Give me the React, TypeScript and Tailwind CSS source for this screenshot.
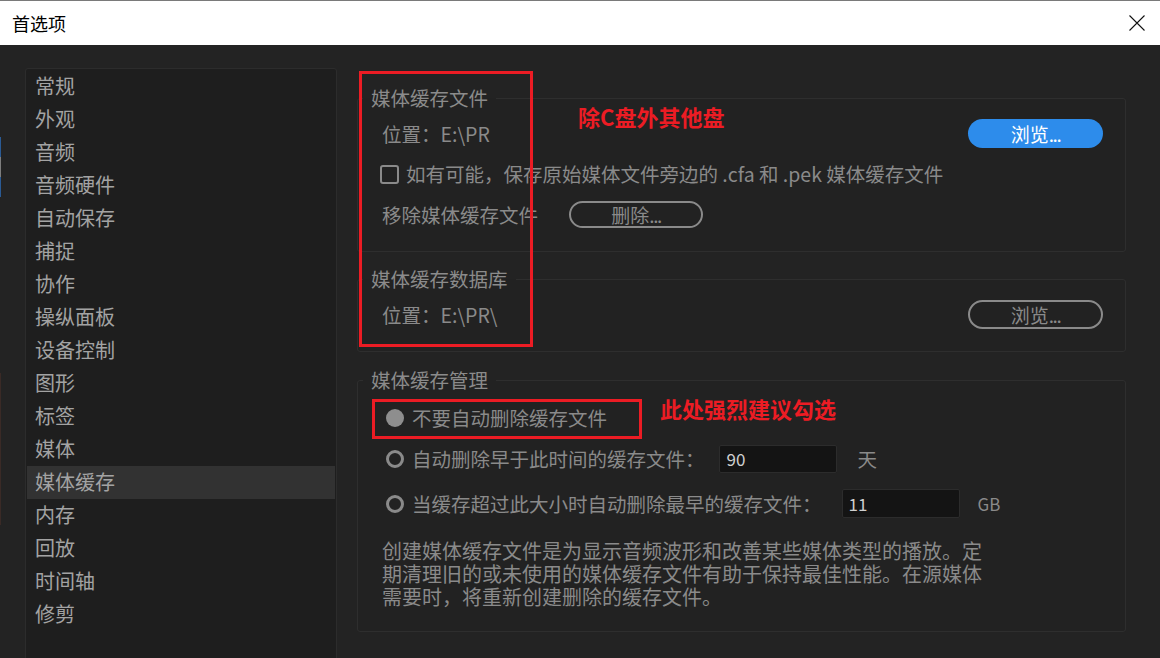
import React from 'react';

const NAV_ITEMS = [
    '常规', '外观', '音频', '音频硬件', '自动保存', '捕捉', '协作', '操纵面板', '设备控制',
    '图形', '标签', '媒体', '媒体缓存', '内存', '回放', '时间轴', '修剪',
];

const Radio: React.FC<{ checked?: boolean }> = ({ checked }) => (
    <span
        className={`ml-[4px] w-[18px] h-[18px] rounded-full shrink-0 ${checked ? 'bg-[#8e8e8e]' : 'border-[3px] border-[#8a8a8a]'}`}
    />
);

const Group: React.FC<{ title: string; children: React.ReactNode }> = ({ title, children }) => (
    <fieldset className="rounded-[3px] border border-[#2e2e2e] bg-[#222222]">
        <legend className="ml-[5px] px-[8px] text-[19.5px] leading-[24px] text-[#8b8b8b]">{title}</legend>
        {children}
    </fieldset>
);

// 按钮文字后的省略号贴着基线，点距较紧
const Dots = () => <span className="tracking-[-1.5px]">...</span>;

// 首选项 > 媒体缓存 设置页
export default function App() {
    return (
        <div className="w-[1160px] h-[658px] overflow-hidden bg-[#232323] font-['Noto_Sans_CJK_SC',sans-serif]">
            {/* 窗口标题栏 */}
            <div className="h-[45px] bg-white border-t border-[#7a7a7a] flex items-center justify-between pl-[12px] pr-[15px]">
                <span className="text-[18px] leading-none text-black">首选项</span>
                <svg width="16" height="16" viewBox="0 0 16 16" className="mt-[-1px]">
                    <path d="M0.5 0.5 L15.5 15.5 M15.5 0.5 L0.5 15.5" stroke="#111" strokeWidth="1.1" fill="none" />
                </svg>
            </div>

            <div className="relative flex h-[613px]">
                {/* 后方窗口露出的边缘 */}
                <div className="w-[1px] flex flex-col shrink-0">
                    <div className="h-[92px]" />
                    <div className="h-[20px] bg-[#2a5a94]" />
                    <div className="h-[20px] bg-[#7d7d7d]" />
                    <div className="h-[20px] bg-[#2a5a94]" />
                    <div className="h-[176px]" />
                    <div className="h-[152px] bg-[#3a2a26]" />
                </div>

                <div className="flex items-start gap-[20px] pl-[24px] pt-[23px]">
                    {/* 左侧分类列表 */}
                    <div className="w-[312px] h-[620px] shrink-0 rounded-[3px] border border-[#2c2c2c] bg-[#1e1e1e] pt-[1px]">
                        {NAV_ITEMS.map(item => (
                            <div
                                key={item}
                                className={`mx-[1px] h-[33px] pl-[8px] pb-[2px] flex items-center text-[20px] text-[#a3a3a3] ${item === '媒体缓存' ? 'bg-[#323232]' : ''}`}
                            >
                                {item}
                            </div>
                        ))}
                    </div>

                    {/* 右侧设置区 */}
                    <div className="w-[769px] mt-[18px] text-[19.5px] text-[#8a8a8a]">
                        <Group title="媒体缓存文件">
                            <div className="pl-[24px] pr-[22px] pt-[9px] pb-[23px]">
                                <div className="h-[29px] flex items-center justify-between">
                                    <span>位置：E:\PR</span>
                                    <button className="w-[135px] h-[29px] rounded-full bg-[#2d8ceb] text-white text-[19px] leading-none">浏览<Dots /></button>
                                </div>
                                <div className="mt-[14px] h-[24px] -ml-[2px] flex items-center gap-[7px]">
                                    <span className="w-[19px] h-[19px] rounded-[3px] border-2 border-[#8a8a8a]" />
                                    <span>如有可能，保存原始媒体文件旁边的 .cfa 和 .pek 媒体缓存文件</span>
                                </div>
                                <div className="mt-[15px] h-[27px] flex items-center">
                                    <span>移除媒体缓存文件</span>
                                    <button className="ml-[31px] w-[134px] h-[27px] rounded-full border-2 border-[#8a8a8a] text-[#8a8a8a] text-[19px] leading-none">删除<Dots /></button>
                                </div>
                            </div>
                        </Group>

                        <div className="mt-[15px]">
                            <Group title="媒体缓存数据库">
                                <div className="pl-[24px] pr-[22px] pt-[9px] pb-[22px]">
                                    <div className="h-[29px] flex items-center justify-between">
                                        <span>位置：E:\PR\</span>
                                        <button className="w-[135px] h-[29px] rounded-full border-2 border-[#8a8a8a] text-[#8a8a8a] text-[19px] leading-none">浏览<Dots /></button>
                                    </div>
                                </div>
                            </Group>
                        </div>

                        <div className="mt-[16px]">
                            <Group title="媒体缓存管理">
                                <div className="pl-[24px] pr-[22px] pt-[14px] pb-[23px]">
                                    <div className="h-[24px] flex items-center gap-[8px]">
                                        <Radio checked />
                                        <span>不要自动删除缓存文件</span>
                                    </div>
                                    <div className="mt-[14px] h-[29px] flex items-center gap-[8px]">
                                        <Radio />
                                        <span>自动删除早于此时间的缓存文件：</span>
                                        <div className="ml-[6px] w-[118px] h-[28px] rounded-[2px] border border-[#2c2c2c] bg-[#141414] pl-[7px] flex items-center text-[17px] text-[#cfcfcf]">90</div>
                                        <span className="ml-[13px]">天</span>
                                    </div>
                                    <div className="mt-[16px] h-[29px] flex items-center gap-[8px]">
                                        <Radio />
                                        <span>当缓存超过此大小时自动删除最早的缓存文件：</span>
                                        <div className="ml-[12px] w-[118px] h-[29px] rounded-[2px] border border-[#2c2c2c] bg-[#141414] pl-[6px] flex items-center text-[17px] text-[#cfcfcf]">11</div>
                                        <span className="ml-[10px] text-[17px]">GB</span>
                                    </div>
                                    <p className="mt-[21px] text-[20px] leading-[23px] whitespace-nowrap">
                                        创建媒体缓存文件是为显示音频波形和改善某些媒体类型的播放。定<br />
                                        期清理旧的或未使用的媒体缓存文件有助于保持最佳性能。在源媒体<br />
                                        需要时，将重新创建删除的缓存文件。
                                    </p>
                                </div>
                            </Group>
                        </div>
                    </div>
                </div>

                {/* 红色标注 */}
                <div className="absolute left-[359px] top-[26px] w-[174px] h-[276px] border-[3px] border-[#ec1c24]" />
                <div className="absolute left-[578px] top-[59px] text-[22px] leading-[24px] font-bold text-[#ec1c24]">除C盘外其他盘</div>
                <div className="absolute left-[372px] top-[354px] w-[270px] h-[40px] border-[3px] border-[#ec1c24]" />
                <div className="absolute left-[660px] top-[351px] text-[22px] leading-[24px] font-bold text-[#ec1c24]">此处强烈建议勾选</div>
            </div>
        </div>
    );
}
